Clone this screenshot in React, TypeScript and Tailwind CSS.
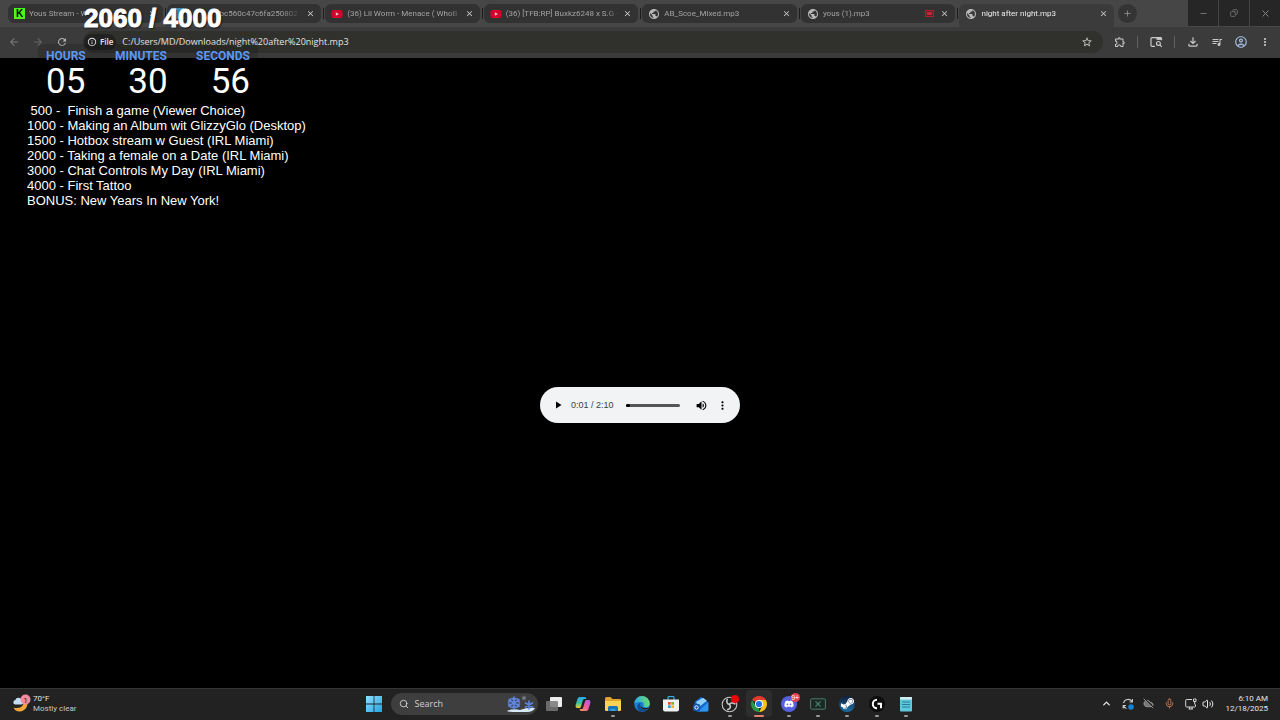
import { useState } from "react";
import type { ReactNode } from "react";
import {
    MdArrowBack,
    MdArrowForward,
    MdClose,
    MdMoreVert,
    MdOutlineAccountCircle,
    MdOutlineExtension,
    MdOutlineFileDownload,
    MdOutlineInfo,
    MdPlayArrow,
    MdPublic,
    MdQueueMusic,
    MdRefresh,
    MdStarBorder,
    MdVolumeUp,
} from "react-icons/md";
import { FaDiscord, FaSteamSymbol } from "react-icons/fa";
import { ChevronUp, CloudOff, Copy, Mic, Minus, Plus, Search, Volume2, X } from "lucide-react";

type Tab = { title: string; icon: ReactNode; indent?: boolean; recording?: boolean; active?: boolean };

function KickIcon() {
    return (
        <span className="flex h-[11px] w-[11px] items-center justify-center bg-[#4df51c] font-['Liberation_Sans'] text-[10px] leading-none font-black text-black">
            K
        </span>
    );
}

function YoutubeIcon() {
    return (
        <svg viewBox="0 0 12 12" className="h-3 w-3">
            <rect x="0.5" y="2" width="11" height="8" rx="2" fill="#d5002c" />
            <path d="M4.8 4.2v3.6L8 6z" fill="#e6c4ca" />
        </svg>
    );
}

const globe = <MdPublic className="h-3 w-3 text-[#b9b9b9]" />;

const tabs: Tab[] = [
    { title: "Yous Stream - W", icon: <KickIcon /> },
    { title: "bc560c47c6fa250802", icon: <span className="block h-[11px] w-[11px] bg-[#3d8fb8]" />, indent: true },
    { title: "(36) Lil Worm - Menace ( WhoB", icon: <YoutubeIcon /> },
    { title: "(36) [TFB:RP] Buxkz6248 x S.G -", icon: <YoutubeIcon /> },
    { title: "AB_Scoe_Mixed.mp3", icon: globe },
    { title: "yous (1).mp3", icon: globe, recording: true },
    { title: "night after night.mp3", icon: globe, active: true },
];

function BrowserTab({ tab }: { tab: Tab }) {
    return (
        <div
            className={
                tab.active
                    ? "flex h-[23px] min-w-0 flex-1 items-start rounded-t-md bg-[#3b3b3b] text-[#ececec]"
                    : "relative flex h-[19px] min-w-0 flex-1 items-start rounded-md bg-[#323232] text-[#a3a3a3] after:absolute after:top-1 after:-right-[3px] after:h-[11px] after:w-px after:bg-[#1c1c1c]"
            }
        >
            <div className="flex h-[19px] min-w-0 flex-1 items-center pr-1.5 pl-1.5">
                <span className="shrink-0">{tab.icon}</span>
                <a
                    href="#"
                    className={
                        tab.indent
                            ? "ml-9 min-w-0 flex-1 overflow-hidden whitespace-nowrap [mask-image:linear-gradient(to_right,black_75%,transparent)]"
                            : "ml-1 min-w-0 flex-1 overflow-hidden whitespace-nowrap [mask-image:linear-gradient(to_right,black_90%,transparent)]"
                    }
                >
                    {tab.title}
                </a>
                {tab.recording && (
                    <span className="mr-0.5 flex h-[7px] w-[9px] items-center justify-center border border-[#a82335] bg-[#6c1c28]">
                        <span className="h-[3px] w-[5px] bg-[#c3273a]" />
                    </span>
                )}
                <button aria-label="Close tab" className="ml-1 shrink-0">
                    <MdClose className="h-[9px] w-[9px] text-[#d0d0d0]" />
                </button>
            </div>
        </div>
    );
}

function TabStrip() {
    return (
        <div className="flex h-[27px] items-start bg-[#464646] font-['Roboto',sans-serif] text-[8px]">
            <nav className="flex min-w-0 flex-1 gap-1 pt-1 pl-2">
                {tabs.map((tab) => (
                    <BrowserTab key={tab.title} tab={tab} />
                ))}
            </nav>
            <button
                aria-label="New tab"
                className="mt-1 mr-[51px] ml-1 flex h-[19px] w-[19px] items-center justify-center rounded-full bg-[#343434]"
            >
                <Plus className="h-[9px] w-[9px] text-[#999]" />
            </button>
            <div className="flex gap-px text-[#8b8b8b]">
                <button aria-label="Minimize" className="flex h-[26px] w-[30px] items-center justify-center bg-[#262626]">
                    <Minus className="h-[9px] w-[9px]" />
                </button>
                <button aria-label="Restore" className="flex h-[26px] w-[30px] items-center justify-center bg-[#262626]">
                    <Copy className="h-2 w-2 -scale-x-100" />
                </button>
                <button aria-label="Close" className="flex h-[26px] w-[30px] items-center justify-center bg-[#262626]">
                    <X className="h-[11px] w-[11px]" />
                </button>
            </div>
        </div>
    );
}

function LensIcon() {
    return (
        <svg viewBox="0 0 14 12" className="h-3 w-3.5" fill="none" stroke="currentColor" strokeWidth="1.2">
            <path d="M6 10.4H3a1 1 0 0 1-1-1V2.600a1 1 0 0 1 1-1h8.500a1 1 0 0 1 1 1v1.600" />
            <path d="M7.500 1.500h5v2.400h-5z" fill="currentColor" stroke="none" />
            <circle cx="9.400" cy="7.400" r="1.900" />
            <path d="m10.800 8.800 2 2" />
        </svg>
    );
}

function Toolbar() {
    return (
        <div className="flex h-[31px] items-center bg-[#3b3b3b] pr-[9px] pb-0.5 text-[#c9c9c9]">
            <div className="flex w-[83px] shrink-0 items-center gap-3 pl-2">
                <button aria-label="Back">
                    <MdArrowBack className="h-3 w-3 text-[#7d7d7d]" />
                </button>
                <button aria-label="Forward">
                    <MdArrowForward className="h-3 w-3 text-[#666]" />
                </button>
                <button aria-label="Reload">
                    <MdRefresh className="h-3 w-3 text-[#b5b5b5]" />
                </button>
            </div>
            <div className="flex h-[22px] min-w-0 flex-1 items-center rounded-full bg-[#30302d] pr-2.5 pl-px">
                <button className="flex h-4 items-center gap-[3px] rounded-full bg-[#212121] px-[3px] text-[8px] font-semibold text-[#e8e8e8]">
                    <MdOutlineInfo className="h-[10px] w-[10px]" />
                    File
                </button>
                <input
                    aria-label="Address"
                    defaultValue="C:/Users/MD/Downloads/night%20after%20night.mp3"
                    className="ml-1.5 min-w-0 flex-1 bg-transparent text-[9px] text-[#e4e4e4] outline-none"
                />
                <button aria-label="Bookmark">
                    <MdStarBorder className="h-3 w-3" />
                </button>
            </div>
            <div className="flex shrink-0 items-center gap-[11px] pl-[11px]">
                <button aria-label="Extensions">
                    <MdOutlineExtension className="h-3 w-3" />
                </button>
                <span className="h-3 w-px bg-[#5f5f5f]" />
                <button aria-label="Search in page">
                    <LensIcon />
                </button>
                <span className="h-3 w-px bg-[#5f5f5f]" />
                <button aria-label="Downloads">
                    <MdOutlineFileDownload className="h-3.5 w-3.5" />
                </button>
                <button aria-label="Media">
                    <MdQueueMusic className="h-3 w-3" />
                </button>
                <button aria-label="Profile">
                    <MdOutlineAccountCircle className="h-3.5 w-3.5 text-[#a3bbdf]" />
                </button>
                <button aria-label="Menu">
                    <MdMoreVert className="h-3 w-3" />
                </button>
            </div>
        </div>
    );
}

function AudioPlayer() {
    const [position, setPosition] = useState(1);

    return (
        <div className="flex h-9 w-[200px] items-center rounded-full bg-[#f1f3f4] pr-[11px] pl-3 text-black">
            <button aria-label="Play">
                <MdPlayArrow className="h-3 w-3" />
            </button>
            <span className="ml-[7px] pt-px font-['Liberation_Sans',sans-serif] text-[9px] whitespace-nowrap text-[#404040]">
                0:01 / 2:10
            </span>
            <input
                type="range"
                aria-label="Seek"
                min={0}
                max={130}
                value={position}
                onChange={(e) => setPosition(Number(e.target.value))}
                className="mx-3 h-[3px] min-w-0 flex-1 appearance-none rounded-full bg-[#555] [&::-webkit-slider-thumb]:h-[3px] [&::-webkit-slider-thumb]:w-1 [&::-webkit-slider-thumb]:appearance-none [&::-webkit-slider-thumb]:rounded-full [&::-webkit-slider-thumb]:bg-black"
            />
            <button aria-label="Mute" className="ml-[3px]">
                <MdVolumeUp className="h-[13px] w-[13px]" />
            </button>
            <button aria-label="More options" className="ml-2">
                <MdMoreVert className="h-[13px] w-[13px]" />
            </button>
        </div>
    );
}

const goals = [
    " 500 -  Finish a game (Viewer Choice)",
    "1000 - Making an Album wit GlizzyGlo (Desktop)",
    "1500 - Hotbox stream w Guest (IRL Miami)",
    "2000 - Taking a female on a Date (IRL Miami)",
    "3000 - Chat Controls My Day (IRL Miami)",
    "4000 - First Tattoo",
    "BONUS: New Years In New York!",
];

const countdown = [
    { label: "HOURS", value: "05" },
    { label: "MINUTES", value: "30" },
    { label: "SECONDS", value: "56" },
];

function StreamOverlay() {
    return (
        <div className="absolute top-1 left-[27px] text-white">
            <p className="ml-[57px] font-['Liberation_Sans_Narrow','Liberation_Sans',sans-serif] text-[26px] leading-7 font-bold [text-shadow:1px_1px_2px_black] [-webkit-text-stroke:1px_white]">
                2060 / 4000
            </p>
            <div className="mt-3 ml-[11px] w-[220px] rounded-t-md bg-black/15 px-2 pt-1 font-['Roboto',sans-serif]">
                <div className="flex justify-between text-[12px] leading-4 font-bold text-[#5b97f5]">
                    {countdown.map((c) => (
                        <span key={c.label}>{c.label}</span>
                    ))}
                </div>
                <div className="flex justify-between text-[35px] leading-9">
                    {countdown.map((c) => (
                        <span key={c.label}>{c.value}</span>
                    ))}
                </div>
            </div>
            <ul className="mt-[3px] font-['Liberation_Sans',sans-serif] text-[13px] leading-[15px] whitespace-pre">
                {goals.map((g) => (
                    <li key={g}>{g}</li>
                ))}
            </ul>
        </div>
    );
}

function StartIcon() {
    return (
        <svg viewBox="0 0 16 16" className="h-4 w-4">
            <defs>
                <linearGradient id="win" x1="0" y1="0" x2="1" y2="1">
                    <stop offset="0" stopColor="#8fe0fb" />
                    <stop offset="1" stopColor="#1fa5ea" />
                </linearGradient>
            </defs>
            <path d="M0 0h7.6v7.6H0zM8.4 0H16v7.6H8.4zM0 8.4h7.6V16H0zM8.4 8.4H16V16H8.4z" fill="url(#win)" />
        </svg>
    );
}

function SnowIcon() {
    return (
        <svg viewBox="0 0 32 18" className="h-[18px] w-8" fill="none" strokeLinecap="round">
            <path d="M2 16q6-3 13-1 8-3 15-2-2 4-8 4H8q-5 0-6-1z" fill="#d5e9f8" />
            <g stroke="#5f86e0" strokeWidth="1.6">
                <path d="M9 2v12M3.8 5l10.4 6M3.8 11l10.4-6M7 3.5l2 1.5 2-1.5M7 12.5 9 11l2 1.5M3.5 7l2.200-.6L5.400 4M14.500 7l-2.200-.6.3-2.400M3.500 9l2.200.6-.3 2.400M14.500 9l-2.200.6.3 2.400" />
                <path d="M24 6v8M20.500 8l7 4M20.500 12l7-4" />
            </g>
            <path d="M19 1v4M17.3 2l3.4 2M17.3 4l3.4-2" stroke="#7b8290" strokeWidth="1" />
        </svg>
    );
}

function TaskViewIcon() {
    return (
        <svg viewBox="0 0 16 16" className="h-4 w-4">
            <rect x="4" y="1" width="12" height="10" rx="1" fill="#ededed" />
            <rect x="0" y="5" width="12" height="10" rx="1" fill="#777" fillOpacity="0.85" />
        </svg>
    );
}

function CopilotIcon() {
    return (
        <svg viewBox="0 0 16 16" className="h-4 w-4">
            <defs>
                <linearGradient id="copA" x1="0" y1="0" x2="0" y2="1">
                    <stop offset="0" stopColor="#2aa8ee" />
                    <stop offset="0.55" stopColor="#38c59b" />
                    <stop offset="1" stopColor="#f2ca35" />
                </linearGradient>
                <linearGradient id="copB" x1="1" y1="0" x2="0" y2="1">
                    <stop offset="0" stopColor="#a45cf0" />
                    <stop offset="0.5" stopColor="#ee5c9c" />
                    <stop offset="1" stopColor="#fb9f4a" />
                </linearGradient>
            </defs>
            <path d="M4.5 1h5c1.2 0 1.6.9 2 2H9.6c-1 0-1.5.6-1.8 1.6L6 10.5C5.7 11.5 5 12 4 12H2.500C.7 12 .2 10.300.8 8.500l1.500-5C2.800 2 3.400 1 4.500 1z" fill="url(#copA)" />
            <path d="M11.500 15h-5c-1.200 0-1.600-.9-2-2h1.900c1 0 1.500-.6 1.800-1.600L10 5.500C10.300 4.500 11 4 12 4h1.500c1.800 0 2.300 1.700 1.700 3.500l-1.500 5c-.5 1.500-1.100 2.500-2.200 2.500z" fill="url(#copB)" />
        </svg>
    );
}

function FolderIcon() {
    return (
        <svg viewBox="0 0 16 16" className="h-4 w-4">
            <path d="M0 2.500A1.500 1.500 0 0 1 1.500 1h4L7.500 3H15a1 1 0 0 1 1 1v10H0z" fill="#e0a32b" />
            <path d="M0 5h16v9a1 1 0 0 1-1 1H1a1 1 0 0 1-1-1z" fill="#fbd255" />
            <path d="M3 15v-3.500A1.500 1.500 0 0 1 4.500 10h7a1.500 1.500 0 0 1 1.500 1.500V15z" fill="#1873b8" />
            <path d="M5.500 15v-2h5v2z" fill="#36a3df" />
        </svg>
    );
}

function EdgeIcon() {
    return (
        <svg viewBox="0 0 16 16" className="h-4 w-4">
            <defs>
                <linearGradient id="edge" x1="0" y1="0.500" x2="1" y2="0.300">
                    <stop offset="0" stopColor="#28a8e8" />
                    <stop offset="1" stopColor="#6be06a" />
                </linearGradient>
            </defs>
            <circle cx="8" cy="8" r="7.800" fill="#1a7fd0" />
            <path d="M.2 8A7.800 7.800 0 0 1 15.800 7.800c0 2.400-1.800 3.500-3.700 3.500-2 0-2.900-.8-2.600-1.500.7-1.500.1-3.800-2.400-3.800C4 6 .6 6.600.2 8z" fill="url(#edge)" />
            <path d="M6 8.500c-1 4 3 6.200 7.600 4.800C10 17.500 3.500 15.500 3.300 11 3.200 8.500 5 7 6.900 7 6.500 7.300 6.200 7.800 6 8.500z" fill="#124a93" />
            <path d="M6.500 8.200c-.4 2.500 2.500 5 8.500 3.200l-.8 1.200C9 15 5.500 12 6.500 8.200z" fill="#222" />
        </svg>
    );
}

function StoreIcon() {
    return (
        <svg viewBox="0 0 16 16" className="h-4 w-4">
            <path d="M5 4V1.500a.8.8 0 0 1 .8-.8h4.400a.8.8 0 0 1 .8.8V4" fill="none" stroke="#3ba5e2" strokeWidth="1.200" />
            <path d="M0 3.500h16v10a2 2 0 0 1-2 2H2a2 2 0 0 1-2-2z" fill="#f0f1f2" />
            <path d="M5 6h2.700v2.700H5z" fill="#e6512b" />
            <path d="M8.300 6H11v2.700H8.300z" fill="#7bb52a" />
            <path d="M5 9.300h2.700V12H5z" fill="#2a9fe0" />
            <path d="M8.300 9.300H11V12H8.300z" fill="#f3b51d" />
        </svg>
    );
}

function OutlookIcon() {
    return (
        <svg viewBox="0 0 16 16" className="h-4 w-4">
            <path d="M1.500 6 8 .8 15 6v8a1.500 1.500 0 0 1-1.500 1.500H3z" fill="#1566c8" />
            <path d="m3 6 7-4.300 4 3.100L6 11z" fill="#8ed1fa" />
            <path d="M15.500 6v8a1.500 1.500 0 0 1-1.500 1.500H5z" fill="#2d95ee" />
            <rect x="0" y="8" width="7" height="7" rx="1.500" fill="#0c55ae" />
            <circle cx="3.500" cy="11.500" r="1.700" fill="none" stroke="#fff" strokeWidth="1" />
        </svg>
    );
}

function ObsIcon() {
    return (
        <svg viewBox="0 0 18 18" className="h-[18px] w-[18px]">
            <circle cx="8.500" cy="9.500" r="7.300" fill="#202020" stroke="#c3c3c3" strokeWidth="1.100" />
            <g fill="none" stroke="#c3c3c3" strokeWidth="1.700" strokeLinecap="round">
                <path d="M6.200 4.500C5 7 6.500 9.300 8.500 9.500" />
                <path d="M13.800 8.800C11.200 7.200 9 8 8.500 9.500" />
                <path d="M6.800 14.600C9.700 13.900 10 11 8.500 9.500" />
            </g>
            <circle cx="14" cy="4" r="4" fill="#e50909" />
        </svg>
    );
}

function ChromeIcon() {
    return (
        <svg viewBox="0 0 16 16" className="h-4 w-4">
            <path d="M8 8 1.100 4A8 8 0 0 1 14.900 4z" fill="#e33b2e" />
            <path d="M8 8V16A8 8 0 0 1 1.100 4l3.400 6z" fill="#279847" />
            <path d="M8 4h6.900A8 8 0 0 1 8 16l3.500-6z" fill="#fbc116" />
            <circle cx="8" cy="8" r="4" fill="#fff" />
            <circle cx="8" cy="8" r="3.100" fill="#1a73e8" />
        </svg>
    );
}

function DiscordIcon() {
    return (
        <span className="relative flex h-4 w-4 items-center justify-center rounded-full bg-[#5661e0]">
            <FaDiscord className="h-[10px] w-[10px] text-white" />
            <span className="absolute -top-[3px] -right-[3px] flex h-[9px] w-[9px] items-center justify-center rounded-full bg-[#e0424e] font-['Liberation_Sans',sans-serif] text-[7px] leading-none text-white">
                9+
            </span>
        </span>
    );
}

function ScreenIcon() {
    return (
        <svg viewBox="0 0 16 12" className="h-3 w-4" fill="none" stroke="#4b7c69">
            <rect x="0.600" y="0.800" width="14.800" height="10.400" rx="1" fill="#1b2824" />
            <path d="m5.500 3.500 5 5M10.500 3.500l-5 5" strokeWidth="1.100" />
        </svg>
    );
}

function SteamIcon() {
    return (
        <span className="flex h-4 w-4 items-center justify-center rounded-full bg-linear-to-b from-[#10203e] to-[#1772a8]">
            <FaSteamSymbol className="h-[15px] w-[15px] text-white" />
        </span>
    );
}

function LogitechIcon() {
    return (
        <svg viewBox="0 0 16 16" className="h-4 w-4">
            <circle cx="8" cy="8" r="8" fill="#0d0d0d" />
            <path d="M8 3.800a4.200 4.200 0 1 0 0 8.400M8.500 7.700h3.500v4.500" fill="none" stroke="#fff" strokeWidth="2" />
        </svg>
    );
}

function NotepadIcon() {
    return (
        <svg viewBox="0 0 16 16" className="h-4 w-4">
            <rect x="2" y="1" width="12" height="14.500" rx="1" fill="#61c8dc" />
            <path d="M2 2a1 1 0 0 1 1-1h10a1 1 0 0 1 1 1v1.500H2z" fill="#d7edf3" />
            <path d="M4 6h8M4 8.500h8M4 11h8" stroke="#217d99" strokeWidth="1" />
        </svg>
    );
}

const apps: { name: string; icon: ReactNode; running?: boolean; focused?: boolean }[] = [
    { name: "Task view", icon: <TaskViewIcon /> },
    { name: "Copilot", icon: <CopilotIcon /> },
    { name: "File Explorer", icon: <FolderIcon />, running: true },
    { name: "Edge", icon: <EdgeIcon /> },
    { name: "Store", icon: <StoreIcon /> },
    { name: "Outlook", icon: <OutlookIcon /> },
    { name: "OBS Studio", icon: <ObsIcon />, running: true },
    { name: "Chrome", icon: <ChromeIcon />, focused: true },
    { name: "Discord", icon: <DiscordIcon />, running: true },
    { name: "Screen", icon: <ScreenIcon />, running: true },
    { name: "Steam", icon: <SteamIcon />, running: true },
    { name: "G HUB", icon: <LogitechIcon />, running: true },
    { name: "Notepad", icon: <NotepadIcon />, running: true },
];

function WeatherIcon() {
    return (
        <svg viewBox="0 0 20 20" className="h-5 w-5">
            <path d="M14.500 5c3 5.500-.5 12.500-7 12.500-3 0-5-1.600-6-4C8 15.500 13 11.500 11.500 6z" fill="#f2a63c" />
            <path d="M3 10.500a2.300 2.300 0 0 1 .3-4.500 3.400 3.400 0 0 1 6.500.6 2 2 0 0 1-.3 3.900z" fill="#c5dcf5" />
            <circle cx="13.500" cy="5.500" r="5" fill="#f48a9c" />
            <text x="13.500" y="8.500" textAnchor="middle" fontSize="8" fill="#331218">1</text>
        </svg>
    );
}

function SyncIcon() {
    return (
        <svg viewBox="0 0 12 12" className="h-3 w-3" fill="none" stroke="#c8c8c8" strokeWidth="1.100">
            <path d="M1.500 5A4.700 4.700 0 0 1 10 3.500M10.400 1v3H7.500M4.500 10.500A4.700 4.700 0 0 1 1.500 7.500M1.200 10.500v-3H4" />
            <circle cx="9" cy="9" r="2.800" fill="#1683d4" stroke="none" />
        </svg>
    );
}

function NetworkIcon() {
    return (
        <svg viewBox="0 0 12 12" className="h-3 w-3" fill="none" stroke="#d5d5d5" strokeWidth="1">
            <path d="M7 1.500H1.500a.8.8 0 0 0-.8.8v5.900c0 .4.400.8.8.8h8.200c.400 0 .8-.4.8-.8V6.500M3.500 11h4.500M4.500 9v2M7 9v2" />
            <path d="M8.500 1h2.500v2.500H8.500zM9.700 3.500v3" />
        </svg>
    );
}

function Taskbar() {
    return (
        <footer className="grid h-8 grid-cols-[1fr_auto_1fr] items-center border-t border-[#353535] bg-[#222] pb-0.5 font-['Roboto',sans-serif] text-[8px] text-[#e6e6e6]">
            <button className="flex items-center gap-px pl-3 text-left">
                <WeatherIcon />
                <span className="leading-[10px]">
                    <span className="block">70°F</span>
                    <span className="block text-[#c6c6c6]">Mostly clear</span>
                </span>
            </button>
            <div className="flex items-center">
                <button aria-label="Start" className="mr-0.5 flex w-[29px] justify-center">
                    <StartIcon />
                </button>
                <label className="mr-0.5 flex h-[22px] w-[147px] items-center rounded-full bg-[#3e3e3e] pr-px pl-2">
                    <Search className="h-[10px] w-[10px] shrink-0 text-[#dedede]" />
                    <input
                        aria-label="Search"
                        placeholder="Search"
                        className="ml-1.5 min-w-0 flex-1 bg-transparent font-['Open_Sans',sans-serif] text-[9px] placeholder:text-[#cfcfcf] outline-none"
                    />
                    <SnowIcon />
                </label>
                <div className="flex w-[381px]">
                    {apps.map((app) => (
                        <button
                            key={app.name}
                            aria-label={app.name}
                            className="relative flex h-[27px] min-w-0 flex-1 items-center justify-center"
                        >
                            <span
                                className={
                                    app.focused
                                        ? "flex h-[27px] w-[26px] items-center justify-center rounded-sm bg-[#2d2d2d]"
                                        : "flex items-center justify-center"
                                }
                            >
                                {app.icon}
                            </span>
                            {app.running && <span className="absolute bottom-0 h-0.5 w-1 rounded-full bg-[#999]" />}
                            {app.focused && <span className="absolute bottom-0 h-0.5 w-[10px] rounded-full bg-[#e57f70]" />}
                        </button>
                    ))}
                </div>
            </div>
            <div className="flex items-center justify-end pr-3">
                <button aria-label="Show hidden icons" className="flex w-[21px] justify-center">
                    <ChevronUp className="h-[11px] w-[11px]" strokeWidth={3} />
                </button>
                <button aria-label="Sync" className="flex w-[21px] justify-center">
                    <SyncIcon />
                </button>
                <button aria-label="OneDrive" className="flex w-[21px] justify-center">
                    <CloudOff className="h-[11px] w-[11px] fill-[#777] text-[#999]" />
                </button>
                <button aria-label="Microphone" className="flex w-[21px] justify-center">
                    <Mic className="h-[11px] w-[11px] text-[#c97b57]" />
                </button>
                <button aria-label="Network" className="flex w-[21px] justify-center">
                    <NetworkIcon />
                </button>
                <button aria-label="Volume" className="mr-2.5 flex w-3.5 justify-center">
                    <Volume2 className="h-3 w-3" />
                </button>
                <button className="text-right leading-[10px]">
                    <span className="block">6:10 AM</span>
                    <span className="block">12/18/2025</span>
                </button>
            </div>
        </footer>
    );
}

export default function App() {
    return (
        <div className="relative flex min-h-screen flex-col bg-black font-['Open_Sans','Noto_Sans',sans-serif]">
            <header>
                <TabStrip />
                <Toolbar />
            </header>
            <main className="flex flex-1 items-center justify-center pt-16">
                <AudioPlayer />
            </main>
            <Taskbar />
            <StreamOverlay />
        </div>
    );
}
